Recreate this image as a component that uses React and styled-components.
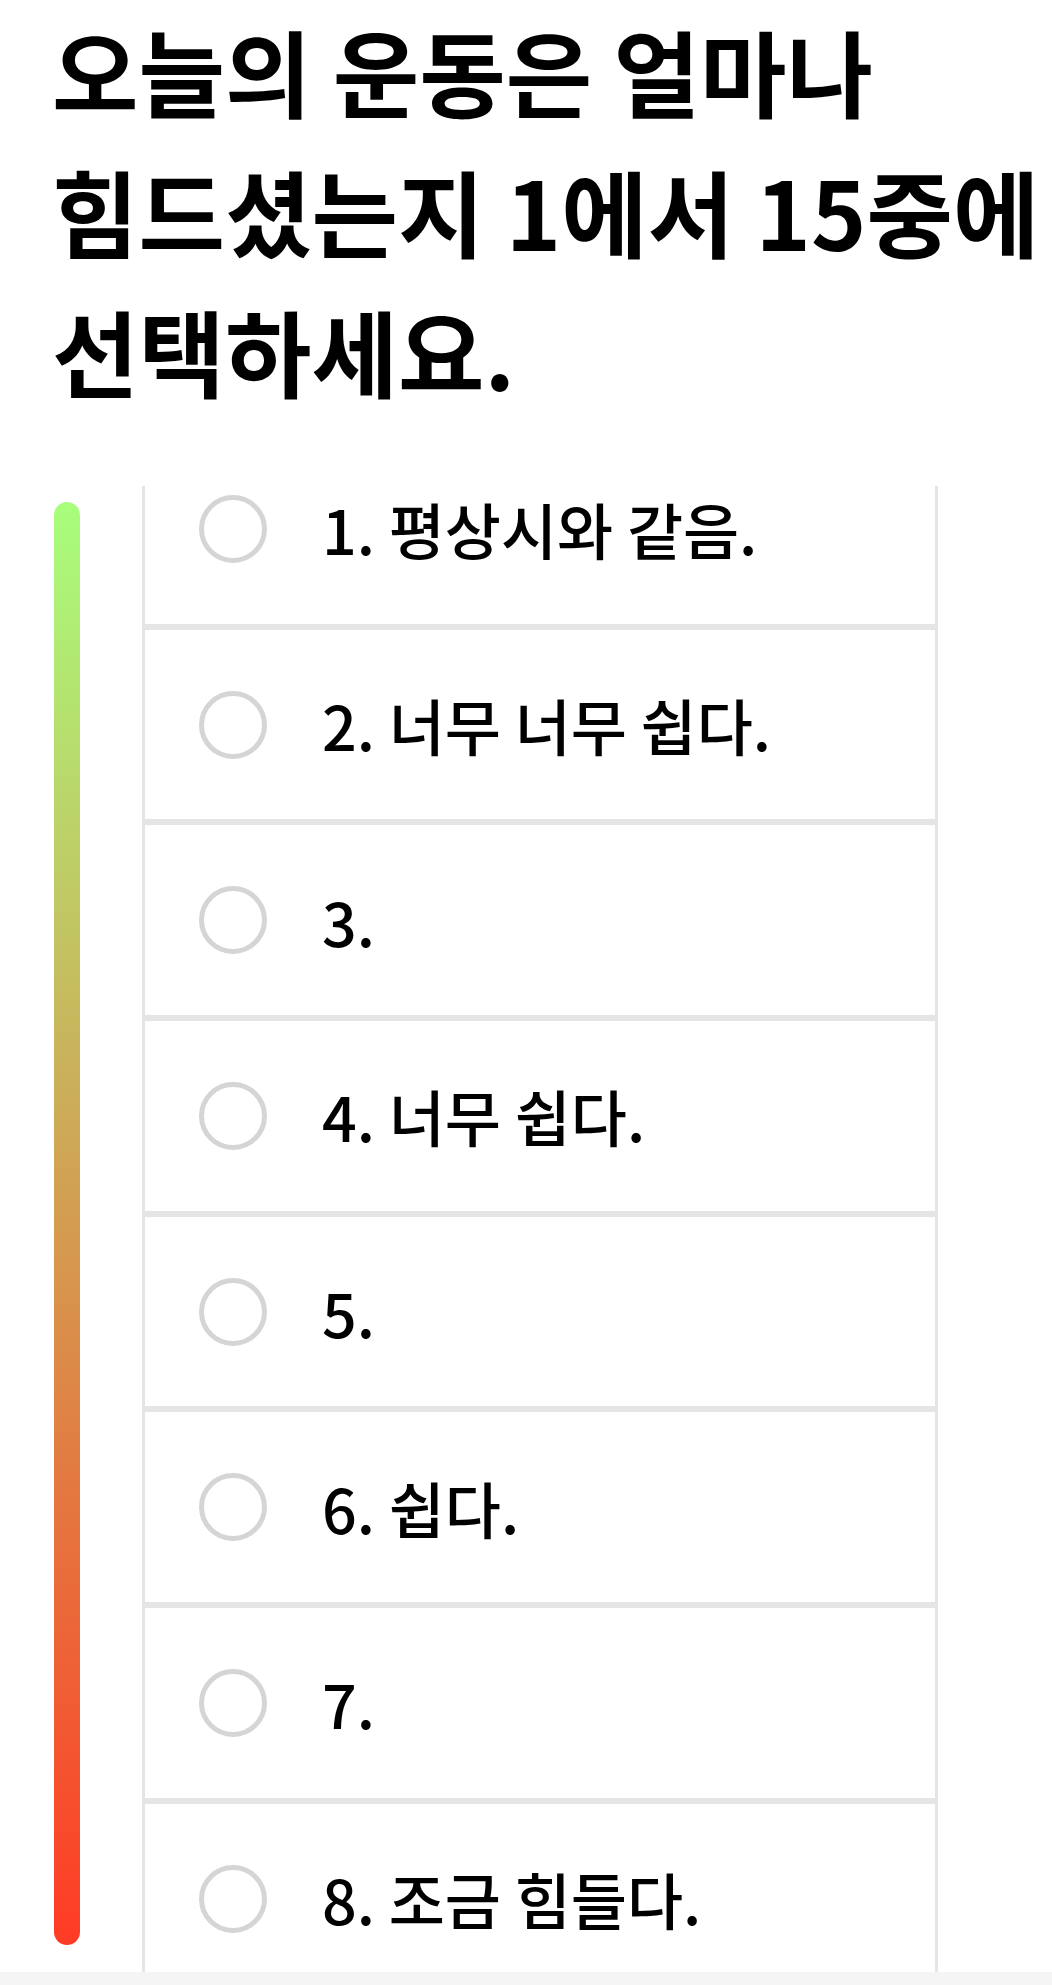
import React, { useLayoutEffect, useRef, useState } from 'react';
import styled, { createGlobalStyle } from 'styled-components';

const options = [
  '1. 평상시와 같음.',
  '2. 너무 너무 쉽다.',
  '3.',
  '4. 너무 쉽다.',
  '5.',
  '6. 쉽다.',
  '7.',
  '8. 조금 힘들다.',
  '9.',
  '10.',
  '11.',
  '12.',
  '13.',
  '14.',
  '15.',
];

const App = () => {
  const [picked, setPicked] = useState(null);
  const listRef = useRef(null);

  // the list is shown scrolled a little, as in the capture
  useLayoutEffect(() => {
    if (listRef.current) listRef.current.scrollTop = 55;
  }, []);

  return (
    <Page>
      <GlobalStyle />
      <Title>오늘의 운동은 얼마나 힘드셨는지 1에서 15중에 선택하세요.</Title>
      <Body>
        <Gauge />
        <List ref={listRef}>
          {options.map((text, i) => (
            <Item key={text} onClick={() => setPicked(i)}>
              <Radio $checked={picked === i} />
              <Label>{text}</Label>
            </Item>
          ))}
        </List>
      </Body>
      <Footer />
    </Page>
  );
};

export default App;

const GlobalStyle = createGlobalStyle`
  html, body {
    margin: 0;
    padding: 0;
    background: #fff;
  }
  body {
    font-family: 'Noto Sans CJK KR', 'Noto Sans', sans-serif;
    color: #000;
  }
`;

const Page = styled.div`
  width: 1052px;
  height: 1985px;
  display: flex;
  flex-direction: column;
  overflow: hidden;
`;

const Title = styled.h1`
  margin: 0 0 66px;
  padding: 0 0 0 52px;
  font-size: 94px;
  line-height: 140px;
  font-weight: 700;
  word-break: keep-all;
`;

const Body = styled.div`
  flex: 1;
  min-height: 0;
  display: flex;
  align-items: stretch;
`;

const Gauge = styled.div`
  flex: none;
  width: 26px;
  margin: 16px 0 27px 54px;
  border-radius: 13px;
  background: linear-gradient(to bottom, #a8fe7c, #ff3b25);
`;

const List = styled.div`
  width: 796px;
  margin-left: 62px;
  overflow-y: auto;
  scrollbar-width: none;

  &::-webkit-scrollbar {
    display: none;
  }
`;

const Item = styled.div`
  box-sizing: border-box;
  height: 195.7px;
  display: flex;
  align-items: center;
  padding-left: 54px;
  border: 3px solid #e5e5e5;
  background: #fff;
  cursor: pointer;
`;

const Radio = styled.span`
  box-sizing: border-box;
  flex: none;
  width: 68px;
  height: 68px;
  border-radius: 50%;
  border: 5px solid ${(p) => (p.$checked ? '#ff6a3d' : '#d5d5d5')};
  background: ${(p) => (p.$checked ? 'radial-gradient(#ff6a3d 40%, #fff 42%)' : '#fff')};
`;

const Label = styled.span`
  margin-left: 55px;
  font-size: 61px;
  font-weight: 500;
  line-height: 1;
`;

const Footer = styled.div`
  flex: none;
  height: 13px;
  background: #f5f5f5;
`;
